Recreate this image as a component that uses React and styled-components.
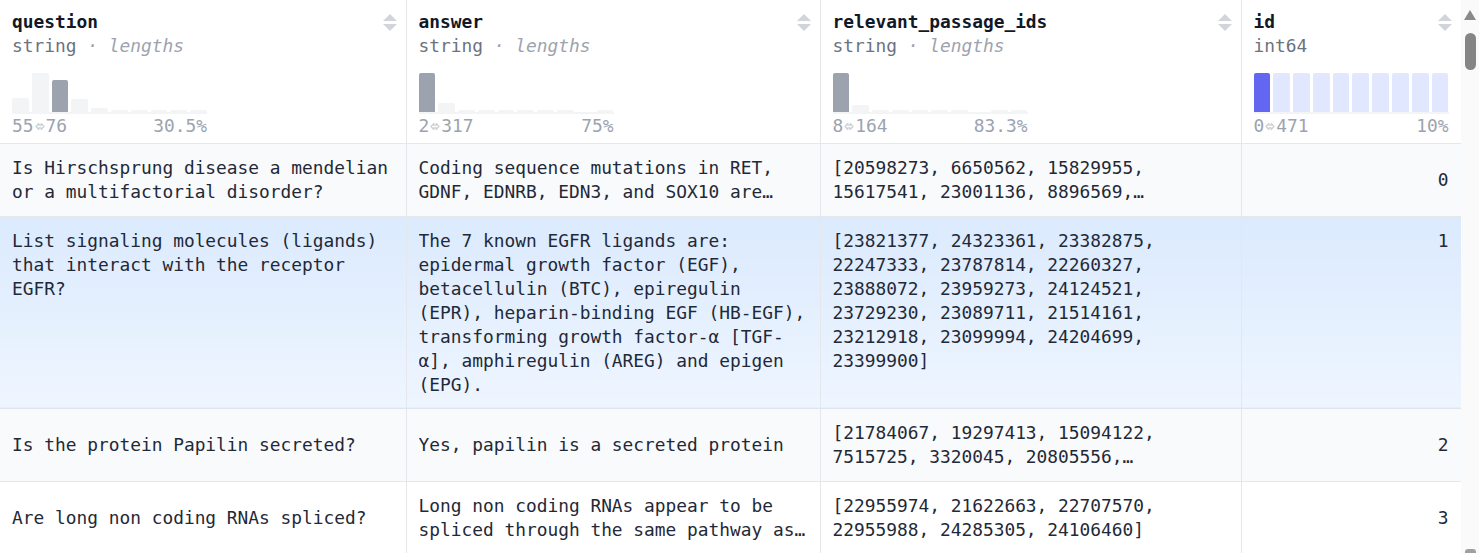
import React from 'react'
import styled, { createGlobalStyle, css } from 'styled-components'

const GlobalStyle = createGlobalStyle`
  html, body {
    margin: 0;
    padding: 0;
    background: #fff;
    overflow: hidden;
  }
  body {
    font-family: "DejaVu Sans Mono", "Liberation Mono", monospace;
    font-size: 17.85px;
    color: #1f2937;
  }
`

const columns = [
  {
    name: 'question',
    type: 'string',
    kind: 'lengths',
    width: 406,
    bars: [14, 39, 32, 13, 4, 2, 2, 2, 2, 2],
    active: 2,
    min: '55',
    max: '76',
    pct: '30.5%',
  },
  {
    name: 'answer',
    type: 'string',
    kind: 'lengths',
    width: 414,
    bars: [39, 9, 2, 2, 2, 2, 2, 2, 0, 2],
    active: 0,
    min: '2',
    max: '317',
    pct: '75%',
  },
  {
    name: 'relevant_passage_ids',
    type: 'string',
    kind: 'lengths',
    width: 421,
    bars: [39, 7, 2, 2, 2, 2, 2, 0, 2, 2],
    active: 0,
    min: '8',
    max: '164',
    pct: '83.3%',
  },
  {
    name: 'id',
    type: 'int64',
    width: 220,
    bars: [39, 39, 39, 39, 39, 39, 39, 39, 39, 39],
    active: 0,
    numeric: true,
    min: '0',
    max: '471',
    pct: '10%',
  },
]

const rows = [
  {
    question: 'Is Hirschsprung disease a mendelian or a multifactorial disorder?',
    answer:
      'Coding sequence mutations in RET, GDNF, EDNRB, EDN3, and SOX10 are associated with long-segment (L-HSCR) as well as syndromic HSCR but fail to explain the transmission of the much more common short-segment form (S-HSCR).',
    ids: '[20598273, 6650562, 15829955, 15617541, 23001136, 8896569, 12239580, 15858239, 9465697]',
    id: 0,
  },
  {
    question: 'List signaling molecules (ligands) that interact with the receptor EGFR?',
    answer:
      'The 7 known EGFR ligands are: epidermal growth factor (EGF), betacellulin (BTC), epiregulin (EPR), heparin-binding EGF (HB-EGF), transforming growth factor-α [TGF-α], amphiregulin (AREG) and epigen (EPG).',
    ids: '[23821377, 24323361, 23382875, 22247333, 23787814, 22260327, 23888072, 23959273, 24124521, 23729230, 23089711, 21514161, 23212918, 23099994, 24204699, 23399900]',
    id: 1,
    open: true,
  },
  {
    question: 'Is the protein Papilin secreted?',
    answer: 'Yes, papilin is a secreted protein',
    ids: '[21784067, 19297413, 15094122, 7515725, 3320045, 20805556, 11076767]',
    id: 2,
  },
  {
    question: 'Are long non coding RNAs spliced?',
    answer:
      'Long non coding RNAs appear to be spliced through the same pathway as the mRNAs',
    ids: '[22955974, 21622663, 22707570, 22955988, 24285305, 24106460]',
    id: 3,
  },
]

const Page = styled.div`
  display: flex;
  height: 100vh;
  overflow: hidden;
`

const Main = styled.div`
  width: 1461px;
  flex: none;
  overflow: hidden;
`

const Table = styled.table`
  width: 1461px;
  table-layout: fixed;
  border-collapse: collapse;
  border-spacing: 0;
`

const HeadCell = styled.th`
  padding: 10px 12px 5px;
  text-align: left;
  vertical-align: top;
  font-weight: 400;
  border-right: 1px solid #e5e7eb;
  border-bottom: 1px solid #e5e7eb;
  background: #fff;
`

const TitleRow = styled.div`
  display: flex;
  align-items: center;
  justify-content: space-between;
  height: 24px;
  line-height: 24px;
`

const Title = styled.span`
  font-weight: 700;
  color: #111827;
`

const SortIcon = styled.svg`
  width: 14px;
  height: 17px;
  margin-right: -3px;
  color: #d1d5db;
`

const TypeLine = styled.div`
  line-height: 24px;
  color: #6b7280;
`

const Kind = styled.span`
  color: #9ca3af;
  font-style: italic;
`

const Histogram = styled.div`
  margin-top: 15px;
  width: 195px;
  height: 39px;
  display: grid;
  grid-template-columns: repeat(10, 1fr);
  column-gap: 3px;
  align-items: end;
  border-bottom: 2px solid #f3f4f6;
`

const Bar = styled.div`
  border-radius: 2px 2px 0 0;
  background: ${p =>
    p.$numeric
      ? p.$active
        ? '#6366f1'
        : '#e0e7ff'
      : p.$active
      ? '#9ca3af'
      : '#f3f4f6'};
`

const RangeRow = styled.div`
  width: 195px;
  display: flex;
  justify-content: space-between;
  line-height: 24px;
  color: #9ca3af;
`

const Range = styled.span`
  display: inline-flex;
  align-items: center;
`

const ArrowIcon = styled.svg`
  width: 10px;
  height: 9px;
  margin: 0 1px;
  color: #cbd0d6;
`

const Cell = styled.td`
  padding: 12px 12px 11.5px;
  line-height: 24px;
  vertical-align: ${p => (p.$open ? 'top' : 'middle')};
  text-align: ${p => (p.$right ? 'right' : 'left')};
  border-right: 1px solid #e5e7eb;
  border-bottom: 1px solid ${p => (p.$open ? '#dbe4f0' : '#e5e7eb')};
  ${p =>
    p.$open
      ? css`
          background: linear-gradient(to bottom, #dbeafe, #eef5ff);
        `
      : css`
          background: ${p.$stripe ? '#f9fafb' : '#fff'};
        `}
`

const Clamp = styled.div`
  overflow: hidden;
  overflow-wrap: break-word;
  ${p =>
    !p.$open &&
    css`
      display: -webkit-box;
      -webkit-box-orient: vertical;
      -webkit-line-clamp: 2;
    `}
`

const Track = styled.div`
  width: 18px;
  flex: none;
  background: #fafafa;
  display: flex;
  flex-direction: column;
  align-items: center;
  justify-content: space-between;
`

const TrackTop = styled.div`
  display: flex;
  flex-direction: column;
  align-items: center;
`

const UpArrow = styled.div`
  margin-top: 10px;
  width: 0;
  height: 0;
  border-left: 6px solid transparent;
  border-right: 6px solid transparent;
  border-bottom: 10px solid #8a8a8a;
`

const Thumb = styled.div`
  margin-top: 13px;
  width: 11px;
  height: 37px;
  border-radius: 6px;
  background: #858585;
`

const TrackFoot = styled.div`
  width: 11px;
  height: 4px;
  border-radius: 3px 3px 0 0;
  background: #a0a0a0;
`

const Sort = () => (
  <SortIcon viewBox="0 0 14 17" fill="currentColor">
    <path d="M7 0 L14 7 L0 7 Z" />
    <path d="M0 10 L14 10 L7 17 Z" />
  </SortIcon>
)

const Arrow = () => (
  <ArrowIcon viewBox="0 0 10 9" fill="none" stroke="currentColor" strokeWidth="1.2" strokeLinejoin="round">
    <path d="M1 4.5 L3.8 1.5 L3.8 3.2 L6.2 3.2 L6.2 1.5 L9 4.5 L6.2 7.5 L6.2 5.8 L3.8 5.8 L3.8 7.5 Z" />
  </ArrowIcon>
)

const ColumnHeader = ({ col }) => (
  <HeadCell>
    <TitleRow>
      <Title>{col.name}</Title>
      <Sort />
    </TitleRow>
    <TypeLine>
      {col.type}
      {col.kind && <Kind> · {col.kind}</Kind>}
    </TypeLine>
    <Histogram>
      {col.bars.map((h, i) => (
        <Bar
          key={i}
          $numeric={col.numeric}
          $active={i === col.active}
          style={{ height: h }}
        />
      ))}
    </Histogram>
    <RangeRow>
      <Range>
        {col.min}
        <Arrow />
        {col.max}
      </Range>
      <span>{col.pct}</span>
    </RangeRow>
  </HeadCell>
)

export default function App() {
  return (
    <>
      <GlobalStyle />
      <Page>
        <Main>
          <Table>
            <colgroup>
              {columns.map(c => (
                <col key={c.name} style={{ width: c.width }} />
              ))}
            </colgroup>
            <thead>
              <tr>
                {columns.map(c => (
                  <ColumnHeader key={c.name} col={c} />
                ))}
              </tr>
            </thead>
            <tbody>
              {rows.map((r, i) => {
                const cellProps = { $open: r.open, $stripe: i % 2 === 0 }
                return (
                  <tr key={r.id}>
                    <Cell {...cellProps}>
                      <Clamp $open={r.open}>{r.question}</Clamp>
                    </Cell>
                    <Cell {...cellProps}>
                      <Clamp $open={r.open}>{r.answer}</Clamp>
                    </Cell>
                    <Cell {...cellProps}>
                      <Clamp $open={r.open}>{r.ids}</Clamp>
                    </Cell>
                    <Cell {...cellProps} $right>
                      {r.id}
                    </Cell>
                  </tr>
                )
              })}
            </tbody>
          </Table>
        </Main>
        <Track>
          <TrackTop>
            <UpArrow />
            <Thumb />
          </TrackTop>
          <TrackFoot />
        </Track>
      </Page>
    </>
  )
}
